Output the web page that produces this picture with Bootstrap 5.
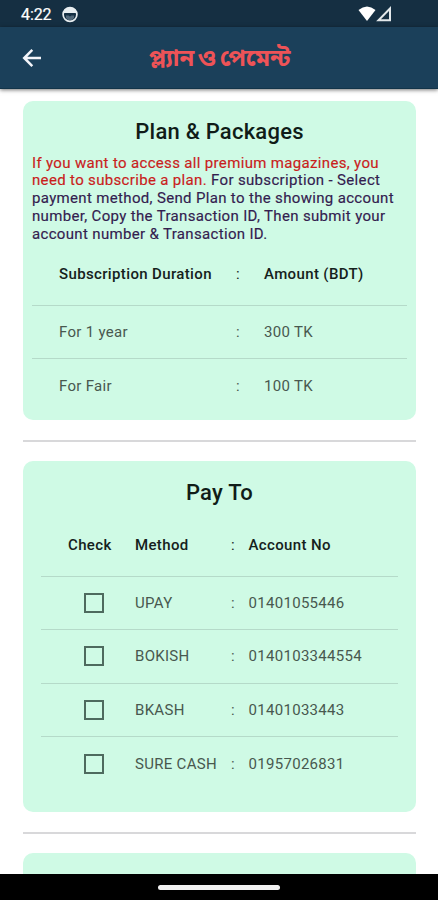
<!DOCTYPE html>
<html lang="en">
<head>
<meta charset="utf-8">
<meta name="viewport" content="width=device-width, initial-scale=1">
<title>Plan &amp; Packages</title>
<link rel="stylesheet" href="https://cdn.jsdelivr.net/npm/bootstrap@5.3.0/dist/css/bootstrap.min.css">
<style>
body{font-family:Roboto,"Noto Sans",sans-serif;color:#101c18}
.screen{height:900px}
.status{height:27px;background:#152f42;padding:2px 46px 0 21px}
.clock{font-size:16px;letter-spacing:-.1px;line-height:25px;width:31px;-webkit-text-stroke:.2px #fff}
.topbar{height:62px;background:#1b405a;border-bottom:1px solid #123449;box-shadow:0 1px 4px rgba(0,0,0,.55);padding-left:22px;z-index:1}
.app-title{color:#ee5357;font-size:23.8px;word-spacing:-2.5px;font-weight:700;font-family:"Noto Sans Bengali","Noto Sans",Roboto,sans-serif;white-space:nowrap;line-height:30px;padding:4px 41px 0 0}
.content{padding:12px 22px 0 23px}
.panel{background:#cffae5;border-radius:10px}
.panel-plans{height:319px;padding:19px 9px 0}
.panel-pay{height:351px;padding:20px 18px 0}
.panel-next{height:60px}
.panel h2{font-size:22px;font-weight:500;line-height:24px;letter-spacing:.23px;margin:0}
.intro{font-size:15px;line-height:17.85px;letter-spacing:.335px;white-space:nowrap;margin:10.5px 0 0;color:#33204f;-webkit-text-stroke:.15px currentColor}
.intro .warn{color:#c9201b}
.rule{height:2px;margin:20px 0 19px;background:#d8d8da}
.line{height:53.6px;border-bottom:1px solid #b5dac9;font-size:15px;letter-spacing:.3px;color:#48584f;white-space:nowrap}
.line:last-child{border-bottom:0}
.line.head{height:62px;font-weight:500;letter-spacing:.36px;color:#15211c}
.line.head .colon{font-weight:400}
.c-name{width:178px;padding-left:27px}
.c-sep{width:54px;padding-left:26px}
.c-check{width:94px;padding-left:27px}
.c-method{width:96px}
.c-sep2{width:17.500px}
.pay-rows{padding-top:9.600px}
.pay-rows .line{height:53.5px}
.pay-rows .line.head{height:62px}
.box{width:20px;height:20px;border:2px solid #4e6a5e;margin-left:16px}
.navpad{height:26px;background:#000;z-index:2}
.pill{width:122px;height:5px;border-radius:3px;background:#f1f1f1}
</style>
<script src="https://cdn.jsdelivr.net/npm/bootstrap@5.3.0/dist/js/bootstrap.bundle.min.js"></script>
</head>
<body class="bg-white">
<div class="screen d-flex flex-column overflow-hidden">
  <div class="status d-flex align-items-center text-white flex-shrink-0">
    <span class="clock">4:22</span>
    <svg class="ms-2" width="20" height="18" viewBox="0 0 20 18"><circle cx="10" cy="8.500" r="6.900" fill="none" stroke="#e9eef0" stroke-width="1.700"/><path d="M4 7V4L7 2h6l3 2v3H4z" fill="#e9eef0"/><path d="M6 9.500h2.500l1.500 1 1.500-1H14V12l-2 2H8l-2-2z" fill="#53697a"/></svg>
    <svg class="ms-auto" width="34" height="18" viewBox="0 0 34 18"><path d="M.5 4Q9-3 17.500 4L9 15z" fill="#fff"/><path d="M32 2.500V14.200H20.500z" fill="none" stroke="#e3e8ea" stroke-width="2"/></svg>
  </div>
  <header class="topbar d-flex align-items-center position-relative flex-shrink-0">
    <svg width="20" height="20" viewBox="0 0 20 20" fill="none" stroke="#f4f5fa" stroke-width="2.500"><path d="M19 10H3M10.300 1.800 2.200 10l8.100 8.200"/></svg>
    <div class="app-title flex-grow-1 text-center">প্ল্যান ও পেমেন্ট</div>
  </header>
  <main class="content flex-grow-1 overflow-hidden">
    <section class="panel panel-plans">
      <h2 class="text-center">Plan &amp; Packages</h2>
      <p class="intro"><span class="warn">If you want to access all premium magazines, you<br>need to subscribe a plan.</span> For subscription - Select<br>payment method, Send Plan to the showing account<br>number, Copy the Transaction ID, Then submit your<br>account number &amp; Transaction ID.</p>
      <div>
        <div class="line head d-flex align-items-center"><span class="c-name">Subscription Duration</span><span class="c-sep colon">:</span><span>Amount (BDT)</span></div>
        <div class="line d-flex align-items-center"><span class="c-name">For 1 year</span><span class="c-sep">:</span><span>300 TK</span></div>
        <div class="line d-flex align-items-center"><span class="c-name">For Fair</span><span class="c-sep">:</span><span>100 TK</span></div>
      </div>
    </section>
    <div class="rule"></div>
    <section class="panel panel-pay">
      <h2 class="text-center">Pay To</h2>
      <div class="pay-rows">
        <div class="line head d-flex align-items-center"><span class="c-check">Check</span><span class="c-method">Method</span><span class="c-sep2 colon">:</span><span>Account No</span></div>
        <div class="line d-flex align-items-center"><span class="c-check"><span class="box d-block"></span></span><span class="c-method">UPAY</span><span class="c-sep2">:</span><span>01401055446</span></div>
        <div class="line d-flex align-items-center"><span class="c-check"><span class="box d-block"></span></span><span class="c-method">BOKISH</span><span class="c-sep2">:</span><span>0140103344554</span></div>
        <div class="line d-flex align-items-center"><span class="c-check"><span class="box d-block"></span></span><span class="c-method">BKASH</span><span class="c-sep2">:</span><span>01401033443</span></div>
        <div class="line d-flex align-items-center"><span class="c-check"><span class="box d-block"></span></span><span class="c-method">SURE CASH</span><span class="c-sep2">:</span><span>01957026831</span></div>
      </div>
    </section>
    <div class="rule"></div>
    <section class="panel panel-next"></section>
  </main>
  <div class="navpad d-flex align-items-center justify-content-center flex-shrink-0"><div class="pill"></div></div>
</div>
</body>
</html>
